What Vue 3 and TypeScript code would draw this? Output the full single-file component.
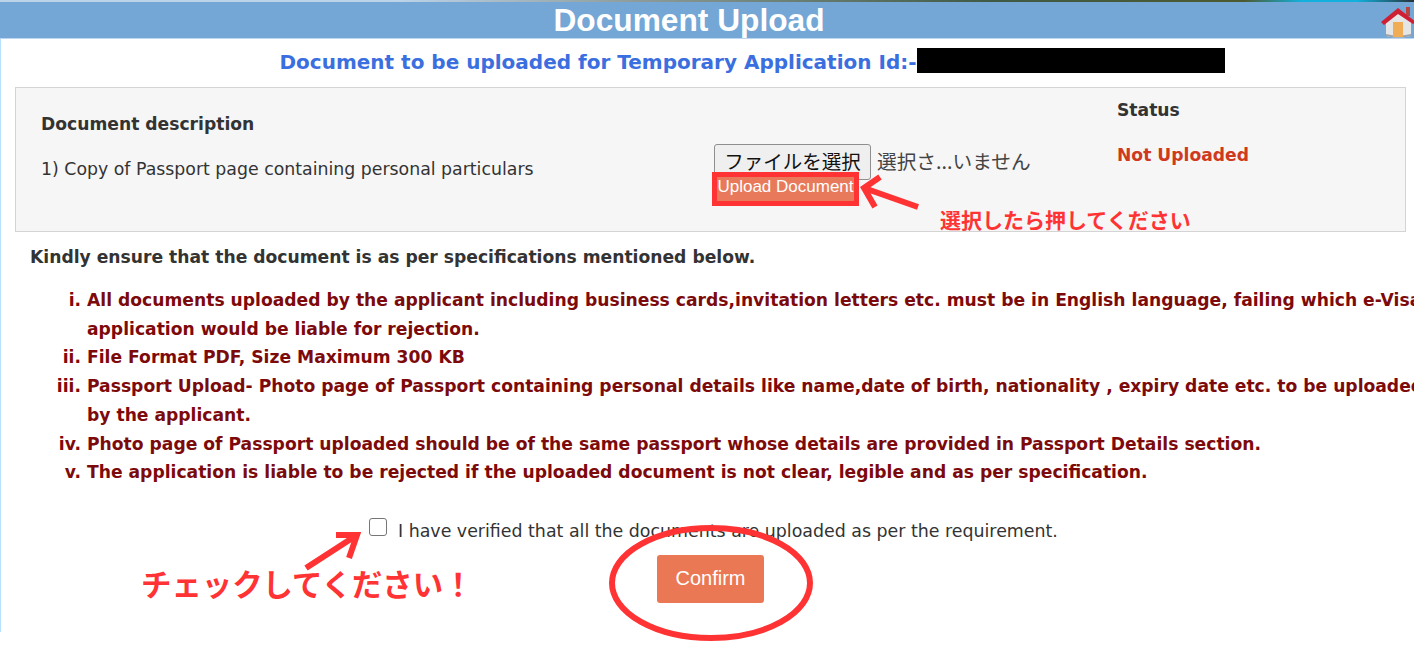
<template>
  <div class="page">
    <div class="left-edge"></div>
    <div class="top-strip"></div>
    <header class="title-bar">
      <h1>Document Upload</h1>
      <svg class="home" viewBox="0 0 36 36" width="36" height="36">
        <rect x="26" y="3" width="4" height="9" fill="#b9433f" />
        <path d="M6 15 L18 6 L31 15 V32 Q18 35 6 32 Z" fill="#e3e5e6" />
        <path d="M6 32 Q18 35 31 32 V30 Q18 33 6 30 Z" fill="#9ba3aa" />
        <rect x="13" y="18" width="10" height="15" fill="#f0ad55" />
        <path d="M1 18 L18 4 L36 18 L33 20 L18 10 L4 21 Z" fill="#cf1f35" />
      </svg>
    </header>

    <h2 class="app-id">
      Document to be uploaded for Temporary Application Id:-<span class="redacted"></span>
    </h2>

    <section class="panel">
      <div class="col-desc">
        <div class="th">Document description</div>
        <div class="td">1) Copy of Passport page containing personal particulars</div>
      </div>
      <div class="col-file">
        <div class="file-row">
          <button class="file-btn">ファイルを選択</button>
          <span class="file-name">選択さ...いません</span>
        </div>
        <button class="upload-btn">Upload Document</button>
      </div>
      <div class="col-status">
        <div class="th">Status</div>
        <div class="not-uploaded">Not Uploaded</div>
      </div>
    </section>

    <p class="notice">Kindly ensure that the document is as per specifications mentioned below.</p>
    <ol class="specs">
      <li v-for="item in specs" :key="item">{{ item }}</li>
    </ol>

    <div class="verify">
      <span class="checkbox"></span>
      <span>I have verified that all the documents are uploaded as per the requirement.</span>
    </div>
    <div class="confirm-row">
      <button class="confirm-btn">Confirm</button>
    </div>

    <!-- 赤い注釈 -->
    <svg class="marks" width="1414" height="662" viewBox="0 0 1414 662">
      <g fill="none" stroke="#ff3333" stroke-width="6">
        <path d="M918 207 L864 188 M880 177 L864 188 L875 207" />
        <path d="M306 568 L357 535 M336 535 L357 535 L349 558" />
        <ellipse cx="711" cy="583" rx="99" ry="55" />
      </g>
    </svg>
    <span class="note note-select">選択したら押してください</span>
    <span class="note note-check">チェックしてください！</span>
  </div>
</template>

<script setup lang="ts">
const specs: string[] = [
  'All documents uploaded by the applicant including business cards,invitation letters etc. must be in English language, failing which e-Visa application would be liable for rejection.',
  'File Format PDF, Size Maximum 300 KB',
  'Passport Upload- Photo page of Passport containing personal details like name,date of birth, nationality , expiry date etc. to be uploaded by the applicant.',
  'Photo page of Passport uploaded should be of the same passport whose details are provided in Passport Details section.',
  'The application is liable to be rejected if the uploaded document is not clear, legible and as per specification.',
]
</script>

<style>
html, body { margin: 0; background: #fff; overflow: hidden; }
</style>

<style scoped>
.page {
  position: relative; width: 1414px; height: 662px; overflow: hidden;
  font-family: "DejaVu Sans", Verdana, sans-serif; font-size: 17.4px; color: #333;
}
.left-edge { position: absolute; left: 0; top: 38px; width: 1px; height: 594px; background: #b8e0ff; }
.top-strip {
  height: 2px;
  background: linear-gradient(90deg, #bcd3ea 0 28%, #8d9c9a 45%, #3f5a45 70%, #4d5a30 88%, #12b0dc 92%, #12b0dc 96%, #26323a 100%);
}
.title-bar {
  position: relative; height: 36px; background: #74a6d6; border-bottom: 1px solid #bcd6ef;
  display: flex; align-items: center; justify-content: center; padding-right: 36px;
}
.title-bar h1 {
  margin: 0; font: bold 31.7px "Liberation Sans", Arial, sans-serif; color: #fff;
}
.home { position: absolute; right: -2px; top: 2px; }
.app-id {
  margin: 0; padding: 11px 0 0 90px; height: 37px; box-sizing: border-box;
  font-size: 20px; font-weight: bold; color: #3b6fe0; line-height: 24px;
  display: flex; justify-content: center;
}
.redacted { display: inline-block; width: 308px; height: 25px; margin-top: -2px; background: #000; }
.panel {
  margin: 11px 8px 0 15px; height: 145px; box-sizing: border-box;
  background: #f6f6f6; border: 1px solid #d4d4d4;
  display: flex;
}
.col-desc { width: 672px; padding: 26px 0 0 25px; box-sizing: border-box; }
.th { font-weight: bold; font-size: 17.17px; line-height: 20px; color: #333; }
.td { margin-top: 25px; line-height: 20px; font-size: 17.33px; }
.col-file { width: 403px; padding-top: 56px; box-sizing: border-box; margin-left: 26px; }
.file-row { display: flex; align-items: center; gap: 6px; }
.file-btn {
  width: 157px; height: 36px; padding: 0 0 3px; border: 1px solid #8f8f8f; border-radius: 3px; background: #efefef;
  font: 19.5px "Noto Sans CJK JP", sans-serif; color: #111;
}
.file-name { font: 19.7px "Noto Sans CJK JP", sans-serif; color: #444; margin-top: -3px; }
.upload-btn {
  display: block; position: relative; margin: -8px 0 0 -2px; width: 147px; height: 34px; padding: 0 0 4px;
  background: #e8795a; border: 5px solid #ff3333; color: #fff; white-space: nowrap; overflow: hidden;
  font: 17px "Liberation Sans", Arial, sans-serif;
}
.col-status { padding-top: 12px; }
.not-uploaded { margin-top: 25px; font-weight: bold; font-size: 17.17px; line-height: 20px; color: #cf3a1e; }
.notice { margin: 15px 0 0 30px; font-weight: bold; font-size: 17.17px; color: #333; line-height: 20px; }
.specs {
  list-style: lower-roman; width: 1428px; margin: 19px 0 0; padding-left: 87px; box-sizing: border-box;
  font-weight: bold; font-size: 17.17px; line-height: 28.7px; color: #7d0a0a;
}
.verify {
  margin-top: 31px; padding-left: 369px; display: flex; align-items: flex-start; gap: 11px; height: 37px;
}
.checkbox {
  width: 16px; height: 16px; border: 1px solid #767676; border-radius: 3px; background: #fff; flex: none;
}
.verify span:last-child { line-height: 24px; margin-top: 1px; }
.confirm-row { display: flex; justify-content: center; padding-left: 7px; }
.confirm-btn {
  width: 107px; height: 48px; border: none; border-radius: 3px; background: #ea7854; color: #fff;
  font: 20px "Liberation Sans", Arial, sans-serif; padding: 0;
}
.marks { position: absolute; left: 0; top: 0; pointer-events: none; }
.note { position: absolute; color: #ff3333; font-family: "Noto Sans CJK JP", sans-serif; white-space: nowrap; }
.note-select { left: 940px; top: 204px; font-size: 21px; font-weight: 700; line-height: 30px; }
.note-check { left: 141px; top: 563px; font-size: 30.4px; font-weight: 700; line-height: 40px; }
</style>
